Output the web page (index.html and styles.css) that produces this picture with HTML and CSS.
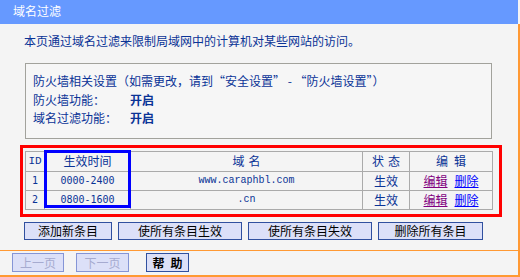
FILE: index.html
```html
<!DOCTYPE html>
<html lang="zh-CN">
<head>
<meta charset="utf-8">
<title>域名过滤</title>
<link rel="stylesheet" href="styles.css">
</head>
<body>
<div class="page">
  <div class="titlebar">域名过滤</div>
  <div class="content">
    <p class="intro">本页通过域名过滤来限制局域网中的计算机对某些网站的访问。</p>
    <div class="settings">
      <div class="line">防火墙相关设置（如需更改，请到“安全设置” - “防火墙设置”）</div>
      <div class="line"><span class="label">防火墙功能：</span><b>开启</b></div>
      <div class="line"><span class="label">域名过滤功能：</span><b>开启</b></div>
    </div>
    <div class="tablewrap">
      <table class="rules">
        <colgroup>
          <col class="c-id"><col class="c-time"><col class="c-dom"><col class="c-st"><col class="c-ed">
        </colgroup>
        <tr class="head">
          <th class="mono">ID</th>
          <th>生效时间</th>
          <th><span class="sp">域</span>名</th>
          <th><span class="sp">状</span>态</th>
          <th><span class="sp2">编</span>辑</th>
        </tr>
        <tr>
          <td class="num">1</td>
          <td class="num">0000-2400</td>
          <td class="dom">www.caraphbl.com</td>
          <td>生效</td>
          <td><a class="edit" href="#">编辑</a><a class="del" href="#">删除</a></td>
        </tr>
        <tr>
          <td class="num">2</td>
          <td class="num">0800-1600</td>
          <td class="dom">.cn</td>
          <td>生效</td>
          <td><a class="edit" href="#">编辑</a><a class="del" href="#">删除</a></td>
        </tr>
      </table>
      <div class="mark mark-red"></div>
      <div class="mark mark-blue"></div>
    </div>
    <div class="actions">
      <button class="btn w-add">添加新条目</button>
      <button class="btn w-all">使所有条目生效</button>
      <button class="btn w-all">使所有条目失效</button>
      <button class="btn w-del">删除所有条目</button>
    </div>
    <div class="footer">
      <button class="btn off w-prev">上一页</button>
      <button class="btn off w-next">下一页</button>
      <button class="btn help"><span class="sp2">帮</span>助</button>
    </div>
  </div>
</div>
</body>
</html>
```
FILE: styles.css
```css
html, body {
  margin: 0;
  padding: 0;
  background: #f4f4f4;
}
body {
  font-family: "Noto Sans CJK SC", "Liberation Sans", sans-serif;
  font-size: 12px;
  color: #0a3396;
}
.page {
  width: 520px;
  height: 277px;
  overflow: hidden;
}
.titlebar {
  width: 518px;
  height: 24px;
  box-sizing: border-box;
  padding-left: 13px;
  background: #6699ff;
  color: #fff;
  line-height: 21px;
}
.content {
  width: 518px;
  height: 253px;
  border-right: 2px solid #ff9933;
  display: flex;
  flex-direction: column;
}
.intro {
  margin: 0;
  padding: 9px 0 0 24px;
  line-height: 16px;
}
.settings {
  margin: 14px 0 0 25px;
  width: 467px;
  height: 76px;
  flex: none;
  box-sizing: border-box;
  border: 1px solid #a2a29c;
  padding: 8px 0 0 7px;
  line-height: 18.5px;
  background: #f6f6f6;
}
.label {
  display: inline-block;
  width: 97px;
}
.settings b {
  font-weight: bold;
}
.tablewrap {
  position: relative;
  margin-top: 12px;
  margin-left: 25px;
  width: 467px;
  height: 61px;
  flex: none;
}
.rules {
  width: 467px;
  border-collapse: collapse;
  table-layout: fixed;
  color: #0a3396;
}
.c-id { width: 19px; }
.c-time { width: 86px; }
.c-dom { width: 232px; }
.c-st { width: 47px; }
.c-ed { width: 83px; }
.rules td {
  height: 19px;
}
.rules th {
  height: 20px;
}
.rules th, .rules td {
  border: 1px solid #aaaaaa;
  padding: 0 0 1px;
  box-sizing: border-box;
  text-align: center;
  font-weight: normal;
  line-height: 14px;
}
.sp { margin-right: 4px; }
.sp2 { margin-right: 6px; }
.mono {
  font-family: "Liberation Mono", monospace;
  font-size: 11px;
}
.num {
  font-family: "DejaVu Sans Mono", monospace;
  font-size: 10px;
}
.dom {
  font-family: "Liberation Mono", monospace;
  font-size: 10px;
}
.edit {
  color: #800080;
}
.del {
  color: #0000ff;
  margin-left: 7px;
}
.mark {
  position: absolute;
  box-sizing: border-box;
  pointer-events: none;
}
.mark-red {
  left: -5px;
  top: -6px;
  width: 482px;
  height: 72px;
  border: 3px solid #ff0000;
}
.mark-blue {
  left: 19px;
  top: -1px;
  width: 87px;
  height: 58px;
  border: 3px solid #0000ff;
}
.actions {
  display: flex;
  gap: 6px;
  margin-top: 10px;
  padding-left: 24px;
}
.btn {
  height: 18px;
  padding: 0;
  margin: 0;
  border: 1px solid #30509f;
  background: #dce0f8;
  color: #000;
  font-family: "Noto Sans CJK SC", sans-serif;
  font-size: 12px;
  line-height: 16px;
}
.w-add { width: 88px; }
.w-all { width: 124px; }
.w-del { width: 105px; }
.footer {
  display: flex;
  margin-top: 10px;
  border-top: 1px solid #ff9933;
  border-bottom: 2px solid #ff9933;
  padding: 2px 0 3px 12px;
}
.footer .btn {
  height: 19px;
}
.off {
  color: #a6abd0;
  border-color: #8595d6;
}
.w-prev { width: 52px; }
.w-next { width: 53px; margin-left: 12px; }
.help {
  width: 43px;
  margin-left: 17px;
  font-weight: bold;
}
```
